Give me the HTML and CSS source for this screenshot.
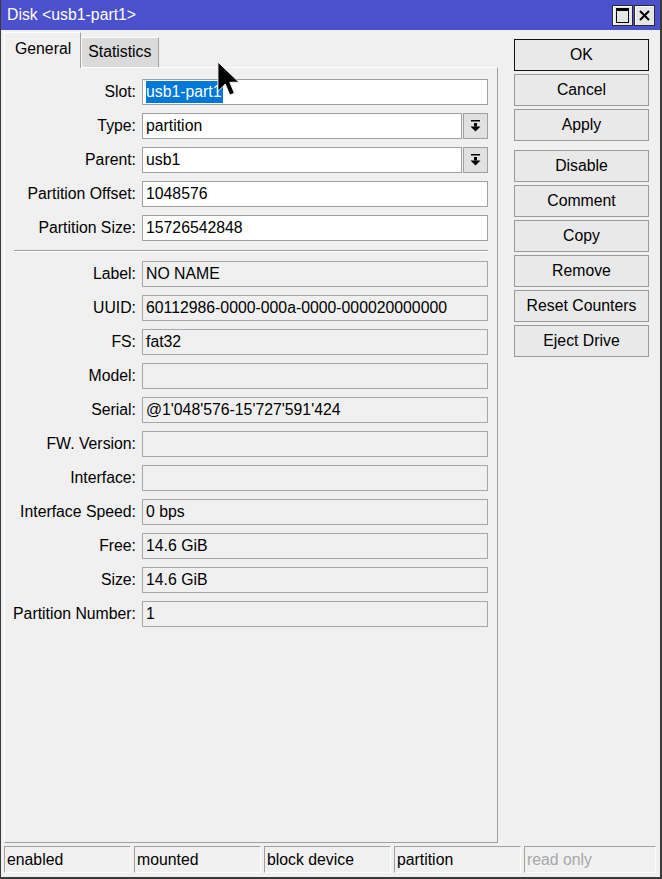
FILE: index.html
```html
<!DOCTYPE html>
<html lang="en">
<head>
    <meta charset="UTF-8">
    <meta name="viewport" content="width=device-width, initial-scale=1.0">
    <title>Disk &lt;usb1-part1&gt;</title>
    <link rel="stylesheet" href="styles.css">
</head>
<body>
    <div class="window">
        <div class="titlebar">
            <span class="title">Disk &lt;usb1-part1&gt;</span>
            <div class="title-btns">
                <div class="tb-btn">
                    <svg width="13" height="15" viewBox="0 0 13 15"><rect x="0.5" y="0.5" width="12" height="14" fill="none" stroke="#000" stroke-width="1"/><rect x="0" y="0" width="13" height="3" fill="#000"/></svg>
                </div>
                <div class="tb-btn">
                    <svg width="11" height="11" viewBox="0 0 11 11"><path d="M1 1 L10 10 M10 1 L1 10" stroke="#000" stroke-width="2" fill="none"/></svg>
                </div>
            </div>
        </div>

        <div class="main">
            <div class="left">
                <div class="tabs">
                    <div class="tab active">General</div>
                    <div class="tab">Statistics</div>
                </div>
                <div class="panel">
                    <div class="form">
                        <div class="label">Slot:</div>
                        <div class="field"><span class="selected">usb1-part1</span></div>

                        <div class="label">Type:</div>
                        <div class="combo">
                            <div class="field">partition</div>
                            <div class="drop-btn">
                                <svg width="11" height="12" viewBox="0 0 11 12"><rect x="1" y="0" width="9" height="1.5" fill="#000"/><rect x="4" y="3" width="3" height="3.5" fill="#000"/><polygon points="0.5,6.5 10.5,6.5 5.5,11.5" fill="#000"/></svg>
                            </div>
                        </div>

                        <div class="label">Parent:</div>
                        <div class="combo">
                            <div class="field">usb1</div>
                            <div class="drop-btn">
                                <svg width="11" height="12" viewBox="0 0 11 12"><rect x="1" y="0" width="9" height="1.5" fill="#000"/><rect x="4" y="3" width="3" height="3.5" fill="#000"/><polygon points="0.5,6.5 10.5,6.5 5.5,11.5" fill="#000"/></svg>
                            </div>
                        </div>

                        <div class="label">Partition Offset:</div>
                        <div class="field">1048576</div>

                        <div class="label">Partition Size:</div>
                        <div class="field">15726542848</div>
                    </div>

                    <div class="sep"></div>

                    <div class="form">
                        <div class="label">Label:</div>
                        <div class="field readonly">NO NAME</div>
                        <div class="label">UUID:</div>
                        <div class="field readonly">60112986-0000-000a-0000-000020000000</div>
                        <div class="label">FS:</div>
                        <div class="field readonly">fat32</div>
                        <div class="label">Model:</div>
                        <div class="field readonly"></div>
                        <div class="label">Serial:</div>
                        <div class="field readonly">@1'048'576-15'727'591'424</div>
                        <div class="label">FW. Version:</div>
                        <div class="field readonly"></div>
                        <div class="label">Interface:</div>
                        <div class="field readonly"></div>
                        <div class="label">Interface Speed:</div>
                        <div class="field readonly">0 bps</div>
                        <div class="label">Free:</div>
                        <div class="field readonly">14.6 GiB</div>
                        <div class="label">Size:</div>
                        <div class="field readonly">14.6 GiB</div>
                        <div class="label">Partition Number:</div>
                        <div class="field readonly">1</div>
                    </div>
                </div>
            </div>

            <div class="actions">
                <div class="btn default">OK</div>
                <div class="btn">Cancel</div>
                <div class="btn">Apply</div>
                <div class="btn spaced">Disable</div>
                <div class="btn">Comment</div>
                <div class="btn">Copy</div>
                <div class="btn">Remove</div>
                <div class="btn">Reset Counters</div>
                <div class="btn">Eject Drive</div>
            </div>
        </div>

        <div class="statusbar">
            <div class="cell">enabled</div>
            <div class="cell">mounted</div>
            <div class="cell">block device</div>
            <div class="cell">partition</div>
            <div class="cell disabled">read only</div>
        </div>

        <svg class="cursor" width="22" height="37" viewBox="0 0 12 20"><path d="M0.5 0.5 L0.5 16.5 L4.5 12.5 L7 18.5 L9.5 17.5 L7 11.5 L12 11.5 Z" fill="#000" stroke="#fff" stroke-width="0.5"/></svg>
    </div>
</body>
</html>
```

FILE: styles.css
```css
* {
    box-sizing: border-box;
}
body {
    margin: 0;
    padding: 0;
    font-family: "Liberation Sans", Arial, sans-serif;
    font-size: 15.8px;
    color: #000;
    background-color: #f0f0f0;
}
.window {
    position: relative;
    width: 662px;
    height: 879px;
    display: flex;
    flex-direction: column;
    background-color: #f0f0f0;
    border-left: 1px solid #3a3a3a;
    border-right: 2px solid #3a3a3a;
    border-bottom: 2px solid #3a3a3a;
}
.titlebar {
    height: 30px;
    flex: none;
    background-color: #4b50cd;
    color: white;
    display: flex;
    justify-content: space-between;
    align-items: center;
    padding: 0 5px 0 6px;
}
.title {
    font-size: 15.8px;
}
.title-btns {
    display: flex;
    gap: 1px;
}
.tb-btn {
    width: 21px;
    height: 21px;
    background-color: #e6e6e6;
    border: 1px solid #2a2a2a;
    box-shadow: inset 1px 1px 0 #fff;
    display: flex;
    align-items: center;
    justify-content: center;
}
.main {
    flex: 1;
    display: flex;
    min-height: 0;
}
.left {
    width: 494px;
    margin-left: 3px;
    display: flex;
    flex-direction: column;
}
.tabs {
    display: flex;
    align-items: flex-end;
    height: 37px;
    padding-top: 2px;
}
.tab {
    height: 30px;
    line-height: 28px;
    padding: 0 7px 0 6px;
    background-color: #dadada;
    border-top: 1px solid #fdfdfd;
    border-left: 1px solid #fdfdfd;
    border-right: 1px solid #a0a0a0;
    white-space: nowrap;
}
.tab.active {
    height: 36px;
    line-height: 32px;
    padding: 0 9px 0 10px;
    background-color: #f0f0f0;
    margin-bottom: -1px;
    position: relative;
    z-index: 1;
}
.panel {
    flex: 1;
    border-top: 1px solid #fdfdfd;
    border-left: 1px solid #fdfdfd;
    border-right: 1px solid #a0a0a0;
    border-bottom: 1px solid #a0a0a0;
    padding: 11px 9px 0 7px;
}
.form {
    display: grid;
    grid-template-columns: 124px 1fr;
    column-gap: 6px;
    row-gap: 8px;
}
.label {
    text-align: right;
    white-space: nowrap;
    line-height: 26px;
}
.field {
    height: 26px;
    line-height: 24px;
    padding: 0 3px;
    background-color: #fff;
    border: 1px solid #a0a0a0;
    white-space: nowrap;
    overflow: hidden;
}
.field.readonly {
    background-color: #f0f0f0;
    border-color: #a6a6a6;
}
.selected {
    background-color: #0078d7;
    color: #fff;
    display: inline-block;
    line-height: 22px;
    padding-right: 1px;
}
.combo {
    display: flex;
    gap: 1px;
}
.combo .field {
    flex: 1;
}
.drop-btn {
    width: 25px;
    height: 26px;
    background-color: #e1e1e1;
    border: 1px solid #a0a0a0;
    display: flex;
    align-items: center;
    justify-content: center;
}
.sep {
    height: 2px;
    margin: 9px 0 9px 2px;
    border-top: 1px solid #a0a0a0;
    border-bottom: 1px solid #fdfdfd;
}
.actions {
    width: 135px;
    margin-left: 16px;
    padding-top: 9px;
    display: flex;
    flex-direction: column;
    gap: 3px;
}
.btn {
    height: 32px;
    line-height: 30px;
    text-align: center;
    background-color: #e9e9e9;
    border: 1px solid #9a9a9a;
    white-space: nowrap;
}
.btn.default {
    border-color: #111;
}
.btn.spaced {
    margin-top: 6px;
}
.statusbar {
    flex: none;
    height: 27px;
    margin: 3px 0 4px 0;
    padding: 0 4px 0 3px;
    display: flex;
    gap: 3px;
}
.cell {
    width: 127px;
    line-height: 25px;
    padding-left: 2px;
    border-top: 1px solid #a0a0a0;
    border-left: 1px solid #a0a0a0;
    border-right: 1px solid #fdfdfd;
    border-bottom: 1px solid #fdfdfd;
    white-space: nowrap;
}
.cell.disabled {
    flex: 1;
    color: #a8a8a8;
}
.cursor {
    position: absolute;
    left: 216px;
    top: 61px;
}
```
